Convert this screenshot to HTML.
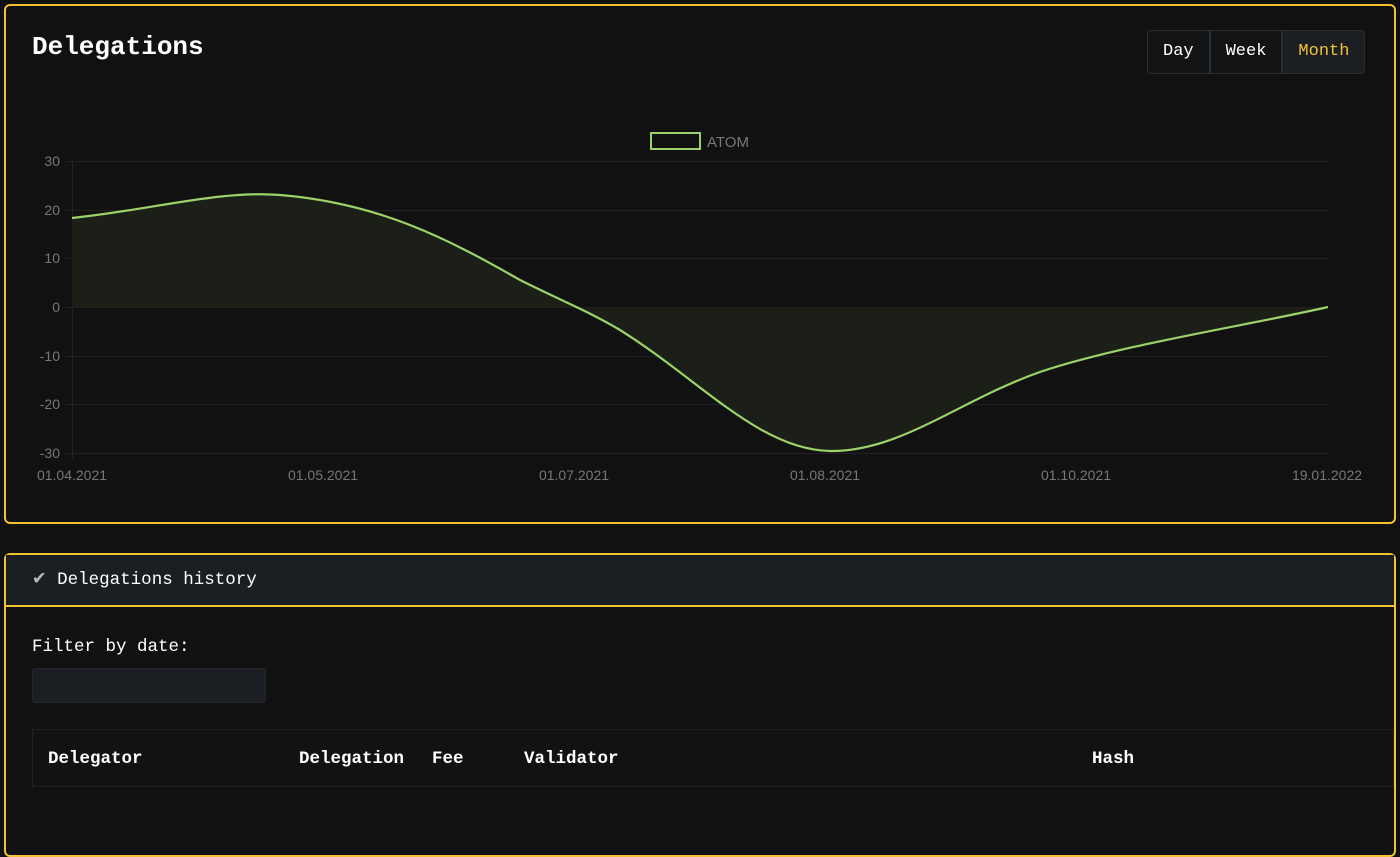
<!DOCTYPE html>
<html style="overflow:hidden;height:791px"><head><style>
html,body{margin:0;background:#111;width:1400px;height:791px;overflow:hidden;font-family:"Liberation Mono",monospace;color:#fff}
.c1{position:absolute;left:4px;top:4px;width:1388px;height:516px;border:2px solid #f2c234;border-radius:6px;background:#111}
h1{position:absolute;left:26px;top:26px;margin:0;font-size:26px;font-weight:bold}
.btns{position:absolute;left:1141px;top:24px;display:flex;border:1px solid #2a2e33;border-radius:4px;overflow:hidden;height:42px}
.btns div{padding:0 15px;line-height:42px;font-size:17px;border-right:2px solid #2a2e33;background:#121314}
.btns div:last-child{border:none;background:#1b1e22;color:#f2c234}
.c2{position:absolute;left:4px;top:553px;width:1388px;height:300px;border:2px solid #f2c234;border-radius:6px;background:#111}
.hd{height:50px;background:#1b1e22;border-bottom:2px solid #f2c234;line-height:50px;padding-left:26px;font-size:17.5px}
.lab{position:absolute;left:26px;top:82px;font-size:17.5px}
.inp{position:absolute;left:26px;top:113px;width:232px;height:33px;background:#1b1e22;border:1px solid #24282c;border-radius:3px}
.tb{position:absolute;left:26px;top:174px;width:1360px;height:56px;border:1px solid #1f2226;background:#121212;font-weight:bold;font-size:17.5px}
.tb span{position:absolute;top:19px}
</style></head><body>
<div class="c1">
<h1>Delegations</h1>
<div class="btns"><div>Day</div><div>Week</div><div>Month</div></div>
</div>
<svg style="position:absolute;left:0;top:0" width="1400" height="520" font-family="Liberation Sans,sans-serif" font-size="14" fill="#777">
<rect x="651" y="133" width="49" height="16" fill="none" stroke="#9bd26a" stroke-width="2"/>
<text x="707" y="147" font-size="15">ATOM</text>
<g stroke="#222" stroke-width="1">
<line x1="66" y1="161.5" x2="1328" y2="161.5"/><line x1="66" y1="210.5" x2="1328" y2="210.5"/><line x1="66" y1="258.5" x2="1328" y2="258.5"/><line x1="66" y1="307.5" x2="1328" y2="307.5"/><line x1="66" y1="356.5" x2="1328" y2="356.5"/><line x1="66" y1="404.5" x2="1328" y2="404.5"/><line x1="66" y1="453.5" x2="1328" y2="453.5"/><line x1="72.5" y1="161" x2="72.5" y2="459"/>
</g>
<g text-anchor="end"><text x="60" y="166">30</text><text x="60" y="215">20</text><text x="60" y="263">10</text><text x="60" y="312">0</text><text x="60" y="361">-10</text><text x="60" y="409">-20</text><text x="60" y="458">-30</text></g>
<g text-anchor="middle"><text x="72" y="480">01.04.2021</text><text x="323" y="480">01.05.2021</text><text x="574" y="480">01.07.2021</text><text x="825" y="480">01.08.2021</text><text x="1076" y="480">01.10.2021</text><text x="1327" y="480">19.01.2022</text></g>
<path d="M72,218 C150,210 220,190 280,195 C380,203 450,240 520,280 C560,300 590,312 620,330 C700,380 760,450 830,451 C900,452 960,400 1040,372 C1120,345 1250,325 1328,307 L72,307 Z" fill="#1c1f18"/>
<path d="M72,218 C150,210 220,190 280,195 C380,203 450,240 520,280 C560,300 590,312 620,330 C700,380 760,450 830,451 C900,452 960,400 1040,372 C1120,345 1250,325 1328,307" fill="none" stroke="#9bd26a" stroke-width="2.2"/>
</svg>
<div class="c2">
<div class="hd"><span style="color:#bbb">✔</span> Delegations history</div>
<div class="lab">Filter by date:</div>
<div class="inp"></div>
<div class="tb"><span style="left:15px">Delegator</span><span style="left:266px">Delegation</span><span style="left:399px">Fee</span><span style="left:491px">Validator</span><span style="left:1059px">Hash</span></div>
</div>
</body></html>
